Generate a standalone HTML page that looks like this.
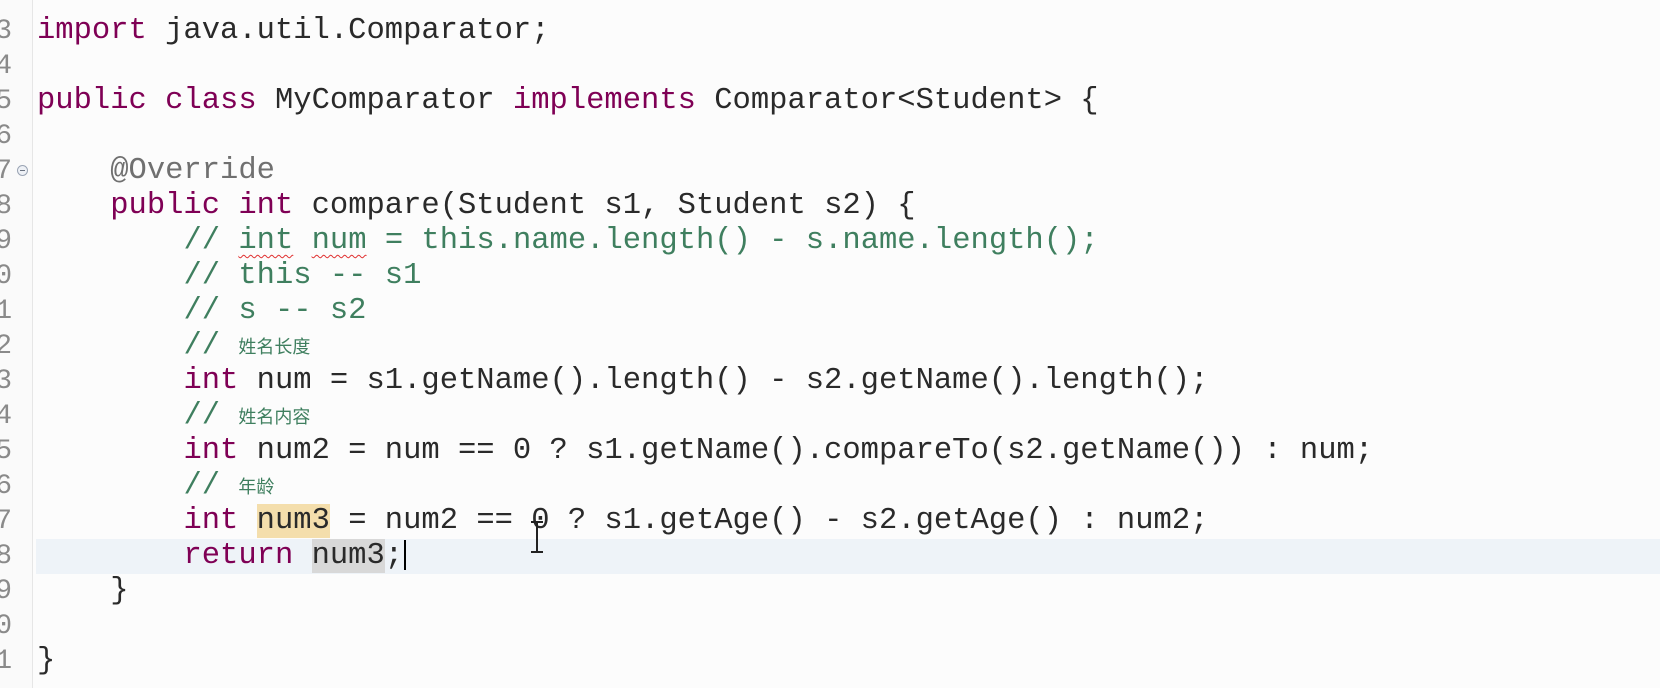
<!DOCTYPE html>
<html><head><meta charset="utf-8"><style>
html,body{margin:0;padding:0;}
body{width:1660px;height:688px;background:#fcfcfc;position:relative;overflow:hidden;font-family:"Liberation Mono","Noto Sans CJK SC",monospace;}
.gut{position:absolute;left:0;top:0;width:32px;height:688px;background:#fafafa;border-right:1px solid #e6e6e6;}
.ln{position:absolute;left:-30px;width:42px;text-align:right;color:#8a8a8a;font-size:28px;height:35px;line-height:35px;}
.l{position:absolute;left:37px;height:35px;line-height:35px;font-size:30.5px;white-space:pre;color:#2a2a2a;}
.k{color:#7f0055;}
.c{color:#3f7f5f;}
.a{color:#707070;}
.cj{font-family:"Noto Sans CJK SC",sans-serif;font-size:18px;}
.sq{text-decoration:underline wavy #e03030;text-decoration-thickness:1px;text-underline-offset:6px;}
.cur{position:absolute;left:36px;top:539px;width:1624px;height:35px;background:#eef3f8;}
</style></head><body>
<div class="cur"></div>
<div class="gut"></div>
<div class="ln" style="top:14px">3</div>
<div class="ln" style="top:49px">4</div>
<div class="ln" style="top:84px">5</div>
<div class="ln" style="top:119px">6</div>
<div class="ln" style="top:154px">7</div>
<div style="position:absolute;left:17px;top:165px;width:9px;height:9px;border:1px solid #9aa4b4;border-radius:50%;background:#eef1f6"><div style="position:absolute;left:2px;top:4px;width:5px;height:1px;background:#6a7280"></div></div>
<div class="ln" style="top:189px">8</div>
<div class="ln" style="top:224px">9</div>
<div class="ln" style="top:259px">10</div>
<div class="ln" style="top:294px">11</div>
<div class="ln" style="top:329px">12</div>
<div class="ln" style="top:364px">13</div>
<div class="ln" style="top:399px">14</div>
<div class="ln" style="top:434px">15</div>
<div class="ln" style="top:469px">16</div>
<div class="ln" style="top:504px">17</div>
<div class="ln" style="top:539px">18</div>
<div class="ln" style="top:574px">19</div>
<div class="ln" style="top:609px">20</div>
<div class="ln" style="top:644px">21</div>

<div class="l" style="top:14px"><span class="k">import</span> java.util.Comparator;</div>
<div class="l" style="top:84px"><span class="k">public</span> <span class="k">class</span> MyComparator <span class="k">implements</span> Comparator&lt;Student&gt; {</div>
<div class="l" style="top:154px">    <span class="a">@Override</span></div>
<div class="l" style="top:189px">    <span class="k">public</span> <span class="k">int</span> compare(Student s1, Student s2) {</div>
<div class="l" style="top:224px">        <span class="c">// <span class="sq">int</span> <span class="sq">num</span> = this.name.length() - s.name.length();</span></div>
<div class="l" style="top:259px">        <span class="c">// this -- s1</span></div>
<div class="l" style="top:294px">        <span class="c">// s -- s2</span></div>
<div class="l" style="top:329px">        <span class="c">// <span class="cj">姓名长度</span></span></div>
<div class="l" style="top:364px">        <span class="k">int</span> num = s1.getName().length() - s2.getName().length();</div>
<div class="l" style="top:399px">        <span class="c">// <span class="cj">姓名内容</span></span></div>
<div class="l" style="top:434px">        <span class="k">int</span> num2 = num == 0 ? s1.getName().compareTo(s2.getName()) : num;</div>
<div class="l" style="top:469px">        <span class="c">// <span class="cj">年龄</span></span></div>
<div class="l" style="top:504px">        <span class="k">int</span> <span style="background:#f4deac">num3</span> = num2 == 0 ? s1.getAge() - s2.getAge() : num2;</div>
<div class="l" style="top:539px">        <span class="k">return</span> <span style="background:#d8d8d8">num3</span>;<span style="display:inline-block;width:2px;height:30px;background:#000;vertical-align:middle;margin-left:1px"></span></div>
<div class="l" style="top:574px">    }</div>
<div class="l" style="top:644px">}</div>
<div style="position:absolute;left:536px;top:521px;width:2px;height:32px;background:#222"></div>
<div style="position:absolute;left:531px;top:521px;width:12px;height:2px;background:#222"></div>
<div style="position:absolute;left:531px;top:551px;width:12px;height:2px;background:#222"></div>
</body></html>
